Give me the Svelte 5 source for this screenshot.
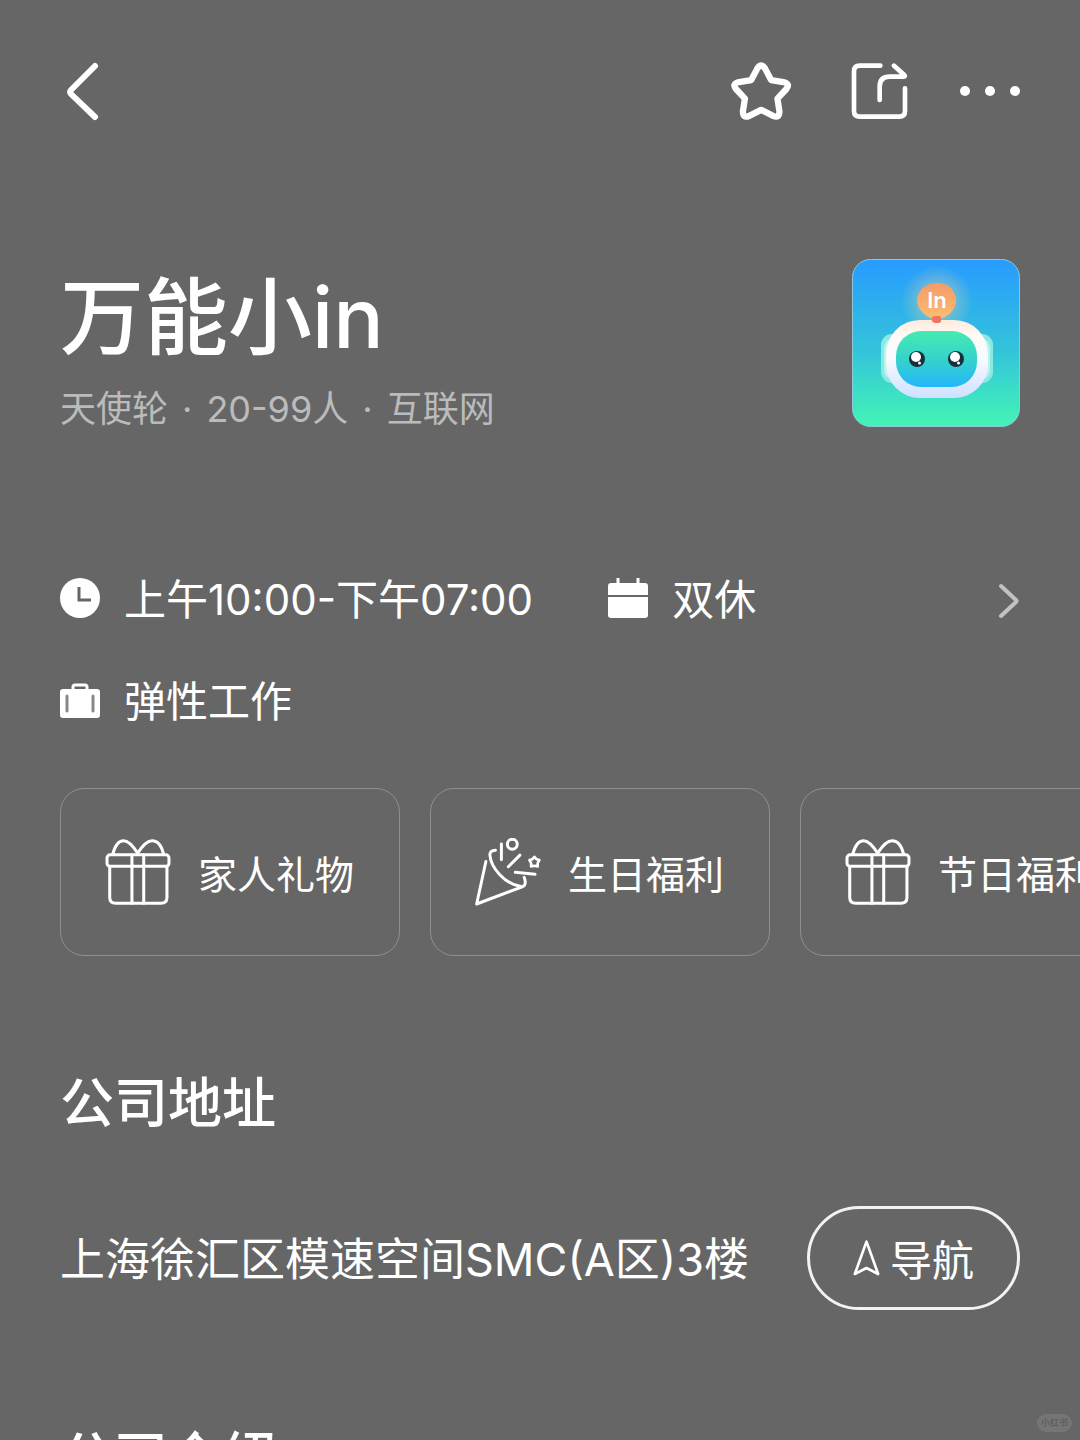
<script lang="ts">
	const company = {
		name: '万能小in',
		tags: ['天使轮', '20-99人', '互联网'],
		address: '上海徐汇区模速空间SMC(A区)3楼'
	};

	const schedule = [
		{ icon: 'clock', label: '上午10:00-下午07:00' },
		{ icon: 'calendar', label: '双休' },
		{ icon: 'case', label: '弹性工作' }
	];

	const benefits = [
		{ icon: 'gift', label: '家人礼物' },
		{ icon: 'party', label: '生日福利' },
		{ icon: 'gift', label: '节日福利' }
	];

	let starred = $state(false);
</script>

<main>
	<header>
		<button class="icon-btn" aria-label="返回">
			<svg width="44" height="62" viewBox="0 0 44 62" class="line" stroke-width="6">
				<path d="M35 6L11 30Q9 32 11 34L35 57" />
			</svg>
		</button>
		<div class="actions">
			<button class="icon-btn" aria-label="收藏" aria-pressed={starred} onclick={() => (starred = !starred)}>
				<svg width="65" height="58" viewBox="0 0 196 174" class="line" stroke-width="19">
					<path
						d="M80 18Q91 2 102 18L121 54L158 60Q180 65 167 81L140 110L146 148Q146 171 127 162L91 144L55 162Q36 171 36 148L42 110L15 81Q2 65 24 60L61 54Z"
					/>
				</svg>
			</button>
			<button class="icon-btn" aria-label="分享">
				<svg width="60" height="56" viewBox="-10 0 180 168" class="line" stroke-width="14">
					<path d="M87 8H25Q8 8 8 25V144Q8 161 25 161H144Q161 161 161 144V76" />
					<path d="M128 8L159 36Q163 41 157 41H115Q85 41 85 71V111" />
				</svg>
			</button>
			<button class="icon-btn" aria-label="更多">
				<svg width="60" height="12" viewBox="0 0 60 12" fill="#fff">
					<circle cx="5" cy="6" r="5" />
					<circle cx="30" cy="6" r="5" />
					<circle cx="55" cy="6" r="5" />
				</svg>
			</button>
		</div>
	</header>

	<section class="company">
		<div class="intro">
			<h1>{company.name}</h1>
			<p>
				{#each company.tags as tag, i}
					{#if i > 0}<span>·</span>{/if}
					<span>{tag}</span>
				{/each}
			</p>
		</div>
		<svg class="logo" viewBox="0 0 168 168" role="img" aria-label={company.name}>
			<defs>
				<linearGradient id="sky" x1="0" y1="0" x2="0" y2="1">
					<stop offset="0" stop-color="#279bff" />
					<stop offset="0.55" stop-color="#34c4da" />
					<stop offset="1" stop-color="#43f5b4" />
				</linearGradient>
				<linearGradient id="head" x1="0" y1="0" x2="0" y2="1">
					<stop offset="0" stop-color="#ffeadb" />
					<stop offset="0.2" stop-color="#fffaf7" />
					<stop offset="0.5" stop-color="#f8faff" />
					<stop offset="1" stop-color="#cfe0ff" />
				</linearGradient>
				<linearGradient id="face" x1="0" y1="0" x2="0" y2="1">
					<stop offset="0" stop-color="#46ebaf" />
					<stop offset="0.5" stop-color="#35d3cb" />
					<stop offset="1" stop-color="#23b6fb" />
				</linearGradient>
				<linearGradient id="balloon" x1="0" y1="0" x2="0" y2="1">
					<stop offset="0" stop-color="#f49b66" />
					<stop offset="1" stop-color="#fcbd72" />
				</linearGradient>
				<radialGradient id="glow">
					<stop offset="0.3" stop-color="#d9d3a8" stop-opacity="0.5" />
					<stop offset="1" stop-color="#d9d3a8" stop-opacity="0" />
				</radialGradient>
			</defs>
			<rect x="0.5" y="0.5" width="167" height="167" rx="18" fill="url(#sky)" stroke="#8fc7d8" />
			<circle cx="85" cy="42" r="36" fill="url(#glow)" />
			<rect x="29" y="75" width="112" height="49" rx="11" fill="#8be9e2" />
			<rect x="32" y="79" width="106" height="42" rx="10" fill="#b8f4ee" />
			<rect x="34" y="61" width="102" height="78" rx="34" fill="url(#head)" />
			<rect x="44" y="72" width="81" height="56" rx="25" fill="url(#face)" />
			<path d="M85 24C97 24 104 32 104 42C104 51 94 60 85 60S65 51 65 42C65 32 73 24 85 24Z" fill="url(#balloon)" />
			<path d="M82 57H87Q89 57 89 60V62Q89 64 85 64T80 62V60Q80 57 82 57Z" fill="#f07560" />
			<text x="85" y="49" text-anchor="middle">In</text>
			<g fill="#19303a">
				<circle cx="65" cy="100" r="8" />
				<circle cx="104" cy="100" r="8" />
			</g>
			<g fill="#fff">
				<circle cx="64" cy="98" r="5" />
				<circle cx="103" cy="98" r="5" />
				<circle cx="67.5" cy="104" r="1.5" />
				<circle cx="106.5" cy="104" r="1.5" />
			</g>
		</svg>
	</section>

	<section class="schedule">
		<ul>
			{#each schedule as item}
				<li>
					<svg width="40" height="40" viewBox="0 0 40 40">
						{#if item.icon === 'clock'}
							<circle cx="20" cy="20" r="20" fill="#fff" />
							<path d="M19 9V22H31" fill="none" stroke="#666" stroke-width="3" />
						{:else if item.icon === 'calendar'}
							<path d="M10 0V8M30 0V8" stroke="#fff" stroke-width="3" />
							<path d="M3 5H37Q40 5 40 8V17H0V8Q0 5 3 5ZM0 19H40V37Q40 40 37 40H3Q0 40 0 37Z" fill="#fff" />
						{:else}
							<path d="M13 10V7Q13 5 15 5H25Q27 5 27 7V10" fill="none" stroke="#fff" stroke-width="3" />
							<rect y="9" width="40" height="29" rx="3" fill="#fff" />
							<path d="M7 16V31M33 16V31" stroke="#888" stroke-width="3" stroke-linecap="round" />
						{/if}
					</svg>
					<span>{item.label}</span>
				</li>
			{/each}
		</ul>
		<button class="icon-btn" aria-label="查看工作时间">
			<svg width="22" height="36" viewBox="0 0 22 36" class="line muted" stroke-width="4">
				<path d="M3 3L18 17Q19 18 18 19L3 33" />
			</svg>
		</button>
	</section>

	<ul class="benefits">
		{#each benefits as item}
			<li>
				{#if item.icon === 'gift'}
					<svg width="66" height="66" viewBox="0 0 194 196" class="line" stroke-width="9">
						<rect x="5" y="47" width="184" height="34" rx="9" />
						<path d="M13 81V174Q13 191 31 191H165Q183 191 183 174V81" />
						<path d="M79 47V191M114 47V191" />
						<path d="M22 45C30 14 43 5 54 5C69 5 82 20 96 42C110 20 124 5 139 5C152 5 166 14 173 45" />
					</svg>
				{:else}
					<svg width="66" height="68" viewBox="0 0 200 206" class="line" stroke-width="9">
						<path d="M33 71L5 200L145 147Q152 143 152 136Q153 128 149 119" />
						<path d="M62 37Q46 38 45 50C47 91 92 140 139 147" />
						<path d="M80 18V66M136 52L101 87M122 104L182 110" />
						<circle cx="113" cy="19" r="15" />
						<path d="M180 57L186 64L195 67L190 76L190 86L180 84L170 86L170 76L165 67L174 64Z" stroke-width="8" />
					</svg>
				{/if}
				<span>{item.label}</span>
			</li>
		{/each}
	</ul>

	<section class="block">
		<h2>公司地址</h2>
		<div class="address">
			<p>{company.address}</p>
			<button class="nav-btn">
				<svg width="27" height="36" viewBox="0 0 80 108" class="line" stroke-width="8">
					<path d="M40 5L5 102L40 84L75 102Z" />
				</svg>
				导航
			</button>
		</div>
	</section>

	<section class="block">
		<h2>公司介绍</h2>
	</section>

	<span class="mark">小红书</span>
</main>

<style>
	:global(body) {
		background: #666;
	}

	main {
		box-sizing: border-box;
		height: 100vh;
		overflow-x: hidden;
		overflow-y: auto;
		scrollbar-width: none;
		padding: 60px 60px 0;
		background: #666;
		color: #fff;
		font-family: Inter, 'Noto Sans CJK SC', sans-serif;
	}

	h1,
	h2,
	p,
	ul {
		margin: 0;
		padding: 0;
	}

	ul {
		list-style: none;
	}

	svg {
		display: block;
		flex: none;
	}

	button {
		color: inherit;
		font: inherit;
		background: none;
		cursor: pointer;
	}

	.icon-btn {
		padding: 0;
		border: 0;
	}

	.line {
		fill: none;
		stroke: #fff;
		stroke-linecap: round;
		stroke-linejoin: round;
	}

	.muted {
		stroke: #c2c2c2;
	}

	header,
	.actions {
		display: flex;
		align-items: center;
	}

	header {
		justify-content: space-between;
	}

	.actions {
		gap: 52px;
	}

	.company {
		display: flex;
		justify-content: space-between;
		align-items: flex-start;
		margin-top: 137px;
	}

	.intro {
		padding-top: 9px;
	}

	h1 {
		font-size: 84px;
		line-height: 100px;
		font-weight: 500;
	}

	.intro p {
		display: flex;
		gap: 14px;
		margin-top: 14px;
		color: #bbb;
		font-size: 36px;
		line-height: 54px;
	}

	.logo {
		width: 168px;
		height: 168px;
	}

	.logo text {
		fill: #fff;
		font-family: Inter, sans-serif;
		font-size: 22px;
		font-weight: 600;
	}

	.schedule {
		display: flex;
		align-items: flex-start;
		margin-top: 134px;
		font-size: 42px;
		line-height: 60px;
	}

	.schedule ul {
		flex: 1;
		display: flex;
		flex-wrap: wrap;
		gap: 42px 75px;
	}

	.schedule li {
		display: flex;
		align-items: center;
		gap: 24px;
	}

	.schedule li svg {
		margin-bottom: 4px;
	}

	.schedule .icon-btn {
		padding: 13px 0;
	}

	.benefits {
		display: flex;
		gap: 30px;
		margin: 56px -60px 0 0;
		overflow: hidden;
	}

	.benefits li {
		flex: none;
		display: flex;
		align-items: center;
		gap: 27px;
		padding: 49px 45px 49px 44px;
		border: 1px solid #8f8f8f;
		border-radius: 24px;
		font-size: 39px;
		line-height: 68px;
	}

	.benefits li,
	.nav-btn {
		font-family: 'Noto Sans CJK SC', sans-serif;
	}

	.block {
		margin-top: 113px;
	}

	h2 {
		font-size: 54px;
		line-height: 70px;
		font-weight: 500;
	}

	.address {
		display: flex;
		justify-content: space-between;
		align-items: center;
		gap: 24px;
		margin-top: 67px;
		font-size: 45px;
		line-height: 60px;
	}

	.address p {
		padding-top: 4px;
	}

	.nav-btn {
		flex: none;
		display: flex;
		align-items: center;
		gap: 10px;
		padding: 19px 43px;
		border: 3px solid #f2f2f2;
		border-radius: 52px;
		font-size: 42px;
	}

	.mark {
		position: fixed;
		right: 8px;
		bottom: 8px;
		padding: 0 4px;
		border-radius: 9px;
		background: #757575;
		color: #606060;
		font-size: 9px;
		font-weight: 700;
		line-height: 18px;
	}
</style>
